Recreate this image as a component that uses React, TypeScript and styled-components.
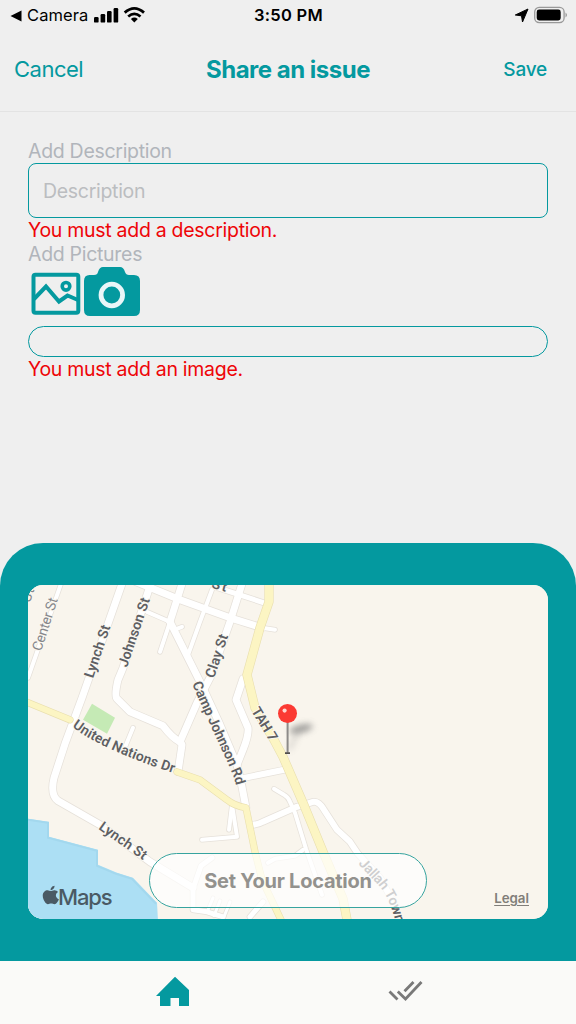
import React from "react";
import styled, { createGlobalStyle } from "styled-components";

const TEAL = "#04999f";

const GlobalStyle = createGlobalStyle`
  body { margin: 0; background: #efefef; }
  * { box-sizing: border-box; }
`;

const Screen = styled.div`
  width: 576px;
  height: 1024px;
  display: flex;
  flex-direction: column;
  background: #efefef;
  font-family: Inter, "Liberation Sans", sans-serif;
  overflow: hidden;
`;

const StatusBar = styled.div`
  height: 29px;
  flex: none;
  display: grid;
  grid-template-columns: 1fr auto 1fr;
  align-items: center;
  padding: 0 9px 0 10px;
  color: #000;
`;

const StatusGroup = styled.div<{ $end?: boolean }>`
  display: flex;
  align-items: center;
  justify-content: ${(p) => (p.$end ? "flex-end" : "flex-start")};
`;

const StatusText = styled.span<{ $weight: number; $size: number; $spacing: number }>`
  font-size: ${(p) => p.$size}px;
  font-weight: ${(p) => p.$weight};
  letter-spacing: ${(p) => p.$spacing}px;
  line-height: 28px;
  white-space: nowrap;
`;

const NavBar = styled.header`
  height: 83px;
  flex: none;
  display: grid;
  grid-template-columns: 1fr auto 1fr;
  align-items: center;
  padding: 0 29px 2px 14px;
  border-bottom: 1px solid #e3e3e3;
`;

const NavButton = styled.button<{ $end?: boolean }>`
  border: 0;
  padding: 0;
  background: none;
  font-family: inherit;
  color: ${TEAL};
  font-size: ${(p) => (p.$end ? 19 : 22)}px;
  font-weight: ${(p) => (p.$end ? 500 : 400)};
  letter-spacing: ${(p) => (p.$end ? -0.2 : -0.5)}px;
  justify-self: ${(p) => (p.$end ? "end" : "start")};
`;

const Title = styled.h1`
  margin: 0;
  padding-left: 15px;
  color: ${TEAL};
  font-size: 24px;
  font-weight: 700;
  letter-spacing: -0.5px;
  white-space: nowrap;
`;

const Form = styled.main`
  flex: 1;
  padding: 27px 28px 0;
`;

const Label = styled.div`
  height: 24px;
  line-height: 24px;
  font-size: 19.5px;
  letter-spacing: -0.3px;
  color: #b1b5bb;
`;

const ErrorText = styled.div`
  height: 24px;
  line-height: 24px;
  font-size: 19.5px;
  letter-spacing: -0.29px;
  color: #ee0508;
`;

const Field = styled.div`
  height: 55px;
  padding: 0 14px;
  display: flex;
  align-items: center;
  border: 1.5px solid ${TEAL};
  border-radius: 8px;
  font-size: 19.5px;
  letter-spacing: -0.3px;
  color: #bbbdc0;
`;

const PictureTools = styled.div`
  height: 60px;
`;

const ImageTray = styled.div`
  height: 31px;
  border: 1.5px solid ${TEAL};
  border-radius: 16px;
`;

const LocationPanel = styled.section`
  position: relative;
  height: 418px;
  flex: none;
  padding: 42px 28px;
  background: ${TEAL};
  border-radius: 43px 43px 0 0;
`;

const MapFrame = styled.div`
  height: 334px;
  border-radius: 15px;
  overflow: hidden;
  background: #f9f5ed;

  svg { display: block; }
`;

const LocationButton = styled.button`
  position: absolute;
  left: 149px;
  top: 310px;
  width: 278px;
  height: 55px;
  padding: 0;
  border: 1px solid #36a49f;
  border-radius: 28px;
  background: rgba(255, 255, 255, 0.7);
  font-family: inherit;
  font-size: 20px;
  font-weight: 700;
  letter-spacing: -0.25px;
  color: #93928e;
`;

const Attribution = styled.span`
  position: absolute;
  right: 47px;
  top: 346px;
  font-size: 13.3px;
  font-weight: 600;
  line-height: 18px;
  color: #817e79;
  text-decoration: underline;
  text-underline-offset: 2px;
`;

const TabBar = styled.nav`
  height: 63px;
  flex: none;
  display: grid;
  grid-template-columns: 230px 230px;
  justify-content: center;
  justify-items: center;
  background: #fafaf8;
`;

const WHITE_ROADS: [string, number][] = [
  ["M61 584L28 678", 4],
  ["M122 584L82 698L65 744L54 778Q50 795 58 801L100 825L150 862L193 888", 7],
  ["M150 586L123 668L118 680Q114 697 117 699L130 712L163 726Q172 738 180 742L182 745L178 772", 7],
  ["M180 742L197 703L211 676L230 622L242 584", 7],
  ["M136 582L180 600L230 618L262 628", 7],
  ["M262 628L275 630", 4],
  ["M147 612L170 622", 4],
  ["M182 584L170 622", 7],
  ["M170 622L160 652", 4],
  ["M170 622L188 658L201 684L220 725L237 765L242 787L246 808", 7],
  ["M182 627L174 630", 4],
  ["M212 590L200 622L187 658", 4],
  ["M218 588L264 603", 5],
  ["M243 679L236 700L248 728Q249 735 243 750L237 765", 7],
  ["M240 779L284 770", 6],
  ["M251 825Q258 825 263 822L297 807L313 802Q319 801 324 810L337 830L350 842L358 854L380 878L396 907", 6],
  ["M274 789L284 795Q288 797 290 802L295 813L306 849L322 895", 4],
  ["M303 850L295 856L275 859L268 863", 4],
  ["M232 805L229 830", 4],
  ["M232 805L237 837L202 840", 4],
  ["M133 728L124 750", 4],
  ["M263 902L250 917", 5],
  ["M212 858L201 866L193 889L193 910L207 912L223 917", 5],
  ["M214 916L220 901M224 917L230 902M208 910L213 898", 3],
];

const YELLOW_ROADS: [string, number][] = [
  ["M269 584L269 602L260 628L247 675L255 708L274 740L283 757L303 803L323 852L343 899L347 920", 8],
  ["M26 702L70 720", 6],
  ["M177 772L200 780L227 800Q234 806 246 808L255 852L262 880L281 920", 6],
];

const LABELS: { id: string; d: string; text: string; len: number; light?: boolean }[] = [
  { id: "center", d: "M41 652L61 590", text: "Center St", len: 55, light: true },
  { id: "lynch", d: "M93 679L114 617", text: "Lynch St", len: 55 },
  { id: "johnson", d: "M127 668L153 591", text: "Johnson St", len: 72 },
  { id: "clay", d: "M214 679L232 625", text: "Clay St", len: 45 },
  { id: "camp", d: "M192 684L211 727L225 757L234 778L241 802", text: "Camp Johnson Rd", len: 111 },
  { id: "tah", d: "M251 711L273 747", text: "TAH 7", len: 37 },
  { id: "nations", d: "M72 727Q88 739 108 748Q140 763 182 776", text: "United Nations Dr", len: 112 },
  { id: "lynch2", d: "M98 829L151 866", text: "Lynch St", len: 55 },
  { id: "jallah", d: "M358 864L378 885Q390 898 396 924L398 940", text: "Jallah Town", len: 72 },
  { id: "topst", d: "M211 588L236 595", text: "St", len: 15 },
  { id: "leftst", d: "M30 603L36 585", text: "St", len: 14, light: true },
];

const TownMap = () => (
  <svg width="520" height="334" viewBox="28 585.2 520 334" fill="none">
    <defs>
      <filter id="soft" x="-50%" y="-100%" width="200%" height="300%">
        <feGaussianBlur stdDeviation="3" />
      </filter>
      {LABELS.map((l) => (
        <path key={l.id} id={l.id} d={l.d} />
      ))}
    </defs>
    <rect x="28" y="585" width="520" height="335" fill="#f9f5ed" />
    <path
      d="M28 819L49 822V837L98 850V865L117 873L133 878L157 903L158 921H28Z"
      fill="#acdff4"
    />
    <path d="M28 820L48 823V838L97 851V866L116 874L132 879L156 904" stroke="#a3d8ee" strokeWidth="2" />
    <path d="M92 704L115 718L107 734L83 720Z" fill="#c5eab5" />
    <g strokeLinejoin="round" strokeLinecap="round">
      {WHITE_ROADS.map(([d, w]) => (
        <path key={d} d={d} stroke="#e6e1da" strokeWidth={w + 1.5} />
      ))}
      {WHITE_ROADS.map(([d, w]) => (
        <path key={d} d={d} stroke="#fff" strokeWidth={w} />
      ))}
      {YELLOW_ROADS.map(([d, w]) => (
        <path key={d} d={d} stroke="#e9dfae" strokeWidth={w + 1.2} />
      ))}
      {YELLOW_ROADS.map(([d, w]) => (
        <path key={d} d={d} stroke="#fcf5c3" strokeWidth={w} />
      ))}
    </g>
    <g fontFamily="Roboto, Inter, sans-serif" fontSize="14" stroke="#faf7f0" strokeWidth="2" strokeLinejoin="round" paintOrder="stroke">
      {LABELS.map((l) => (
        <text key={l.id} fill={l.light ? "#85868a" : "#5e5f63"} fontWeight={l.light ? 400 : 600} textLength={l.len}>
          <textPath href={`#${l.id}`} textLength={l.len}>{l.text}</textPath>
        </text>
      ))}
    </g>
    <ellipse cx="301" cy="729" rx="12" ry="4" fill="#777" opacity=".7" filter="url(#soft)" transform="rotate(-14 301 729)" />
    <path d="M289 750L298 733" stroke="#777" strokeWidth="4" opacity=".25" filter="url(#soft)" />
    <path d="M287.6 722V753" stroke="#8d8b89" strokeWidth="2" />
    <path d="M285 753.3H290" stroke="#504e4c" strokeWidth="1.6" />
    <circle cx="287.5" cy="713.7" r="9.5" fill="#fb3a33" />
    <circle cx="284.6" cy="710.8" r="2.1" fill="#ffd7d0" />
    <g fill="#4a5a64">
      <path
        transform="translate(42.5 884.8) scale(.042 .0405)"
        d="M319 269c0-37 17-65 50-85-19-27-47-42-84-45-35-3-74 21-88 21-15 0-49-20-76-20C66 141 6 185 6 275c0 27 5 54 15 82 13 38 60 131 109 129 26-1 44-18 77-18 32 0 49 18 78 18 49-1 92-85 104-123-67-32-70-93-70-94ZM262 104c27-32 25-62 24-73-24 1-52 16-68 35-18 20-28 45-26 73 26 2 50-11 70-35Z"
      />
      <text x="58" y="905" fontFamily="Inter, sans-serif" fontSize="22" fontWeight="500" textLength="54.5">Maps</text>
    </g>
  </svg>
);

export default function App() {
  return (
    <Screen>
      <GlobalStyle />
      <StatusBar>
        <StatusGroup>
          <svg width="17" height="28" viewBox="10 0 17 28">
            <path d="M10.5 15L21.5 9.5V20.5Z" />
          </svg>
          <StatusText $weight={400} $size={16.5} $spacing={0.1}>Camera</StatusText>
          <svg width="58" height="28" viewBox="88 0 58 28">
            <rect x="94" y="16" width="4.6" height="5.6" rx="1.2" />
            <rect x="100.6" y="13" width="4.6" height="8.6" rx="1.2" />
            <rect x="107" y="10" width="4.6" height="11.6" rx="1.2" />
            <rect x="113.6" y="7" width="4.6" height="14.6" rx="1.2" />
            <g fill="none" stroke="#000" strokeWidth="2.8">
              <path d="M124.7 11.6Q134.3 3.2 144 11.6" />
              <path d="M128.2 15.5Q134.3 10.3 140.5 15.5" />
            </g>
            <path d="M130.9 17.9Q134.3 15.3 137.8 17.9L134.3 21.4Z" />
          </svg>
        </StatusGroup>
        <StatusText $weight={600} $size={16.5} $spacing={0.3}>3:50 PM</StatusText>
        <StatusGroup $end>
          <svg width="54" height="28" viewBox="513.5 0 54 28">
            <path d="M528.5 8L515.8 14L522 14.8L523 21Z" stroke="#000" strokeLinejoin="round" />
            <rect x="535.2" y="6.4" width="29.4" height="15.2" rx="4.5" fill="none" stroke="#999" strokeWidth="1.3" />
            <rect x="537.2" y="8.6" width="24" height="10.8" rx="2.4" />
            <path d="M566 11.4Q569 14 566 16.6Z" fill="#999" />
          </svg>
        </StatusGroup>
      </StatusBar>
      <NavBar>
        <NavButton>Cancel</NavButton>
        <Title>Share an issue</Title>
        <NavButton $end>Save</NavButton>
      </NavBar>
      <Form>
        <Label>Add Description</Label>
        <Field>Description</Field>
        <ErrorText>You must add a description.</ErrorText>
        <Label>Add Pictures</Label>
        <PictureTools>
          <svg width="120" height="60" viewBox="28 266 120 60" fill="none">
            <rect x="33.5" y="274.7" width="44.8" height="38" rx="2" stroke={TEAL} strokeWidth="4" />
            <path d="M34 299L46 286.500L59 301.500L67.500 295.500L78 300" stroke={TEAL} strokeWidth="4" />
            <circle cx="66" cy="286.3" r="3.8" stroke={TEAL} strokeWidth="3.6" />
            <path
              d="M89.500 275H94Q97.500 275 98 272Q99.500 267 103 267H120Q123.500 267 125 272Q126 275 129 275H134Q140 275 140 281V310Q140 316 134 316H90Q84 316 84 310V281Q84 275 89.500 275Z"
              fill={TEAL}
            />
            <circle cx="111.8" cy="295" r="10.8" stroke="#e9f6f8" strokeWidth="4.8" />
          </svg>
        </PictureTools>
        <ImageTray />
        <ErrorText>You must add an image.</ErrorText>
      </Form>
      <LocationPanel>
        <MapFrame>
          <TownMap />
        </MapFrame>
        <LocationButton>Set Your Location</LocationButton>
        <Attribution>Legal</Attribution>
      </LocationPanel>
      <TabBar>
        <svg width="60" height="62" viewBox="143 961 60 62">
          <path d="M175 976.8L189 990V1006H179V998H170.5V1006H160V996H156Z" fill={TEAL} />
        </svg>
        <svg width="60" height="62" viewBox="373 961 60 62" fill="none" stroke="#797979" strokeWidth="2.8">
          <path d="M389.500 991.500L397.500 999.500M397.800 991.500L405.500 999L421.500 982M404.500 991.300L413.500 982" />
        </svg>
      </TabBar>
    </Screen>
  );
}
